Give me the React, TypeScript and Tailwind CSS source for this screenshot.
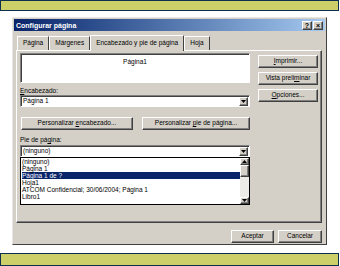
import React from "react";

const raised =
  "border border-t-white border-l-white border-r-[#404040] border-b-[#404040] shadow-[inset_-1px_-1px_0_#808080]";
const sunken =
  "border border-t-[#808080] border-l-[#808080] border-r-white border-b-white shadow-[inset_1px_1px_0_#404040]";

function Arrow({ up = false }: { up?: boolean }) {
  return (
    <svg width="5" height="3" viewBox="0 0 5 3" className={up ? "rotate-180" : ""}>
      <path d="M0 0H5L2.5 3Z" fill="#000" />
    </svg>
  );
}

function Btn({ children, className = "" }: { children: React.ReactNode; className?: string }) {
  return (
    <div
      className={`${raised} bg-[#d4d0c8] h-[13px] flex items-center justify-center text-[6.5px] leading-none text-black ${className}`}
    >
      <span className="whitespace-pre">{children}</span>
    </div>
  );
}

function Combo({ value }: { value: string }) {
  return (
    <div className={`${sunken} bg-white h-[12px] flex items-center`}>
      <div className="flex-1 pl-[2px] text-[6.5px] leading-none">{value}</div>
      <div className={`${raised} bg-[#d4d0c8] w-[9px] h-[9px] mr-[1px] flex items-center justify-center`}>
        <Arrow />
      </div>
    </div>
  );
}

function Tab({ label, active = false }: { label: string; active?: boolean }) {
  return (
    <div
      className={
        active
          ? "relative z-10 h-[16px] -mb-[1px] px-[5px] bg-[#d4d0c8] border border-b-0 border-t-white border-l-white border-r-[#404040] flex items-center text-[6.5px] leading-none"
          : "h-[14px] px-[5px] bg-[#d4d0c8] border border-b-0 border-t-white border-l-white border-r-[#404040] flex items-center text-[6.5px] leading-none"
      }
    >
      {label}
    </div>
  );
}

export default function App() {
  const items = [
    "(ninguno)",
    "Página 1",
    "Página 1 de ?",
    "Hoja1",
    "ATCOM Confidencial; 30/06/2004; Página 1",
    "Libro1",
  ];
  return (
    <div className="w-[340px] h-[266px] bg-white flex flex-col font-['Liberation_Sans',Arial,sans-serif] text-black">
      <div className="h-[11px] w-[339px] bg-[#cdcf68] border border-[#0f2f4f]" />

      <div className="mt-[6px] ml-[12px] w-[315px] h-[228px] bg-[#d4d0c8] border border-t-[#e8e6e2] border-l-[#e8e6e2] border-r-[#404040] border-b-[#404040] flex flex-col">
        {/* title bar */}
        <div className="h-[12px] mx-[1px] mt-[1px] px-[2px] flex items-center justify-between bg-linear-to-r from-[#0a246a] to-[#a6caf0]">
          <span className="text-white font-bold text-[7px] leading-none">Configurar página</span>
          <div className="flex gap-[1px]">
            <div className={`${raised} bg-[#d4d0c8] w-[10px] h-[9px] flex items-center justify-center text-[7px] font-bold leading-none`}>
              ?
            </div>
            <div className={`${raised} bg-[#d4d0c8] w-[10px] h-[9px] flex items-center justify-center text-[7px] font-bold leading-none`}>
              ×
            </div>
          </div>
        </div>

        {/* tabs */}
        <div className="mt-[3px] ml-[4px] flex items-end h-[16px]">
          <Tab label="Página" />
          <Tab label="Márgenes" />
          <Tab label="Encabezado y pie de página" active />
          <Tab label="Hoja" />
        </div>

        {/* panel */}
        <div className="ml-[3px] w-[306px] h-[173px] border border-t-white border-l-white border-r-[#404040] border-b-[#404040] shadow-[inset_-1px_-1px_0_#808080] flex pl-[3px] pt-[2px] gap-[8px]">
          <div className="w-[230px] flex flex-col">
            <div className={`${sunken} bg-white h-[30px] flex justify-center pt-[5px]`}>
              <span className="text-[6.5px] leading-none">Página1</span>
            </div>
            <div className="mt-[4px] h-[7px] text-[6.5px] leading-[7px]">
              <span className="underline">E</span>ncabezado:
            </div>
            <div className="mt-[1px]">
              <Combo value="Página 1" />
            </div>
            <div className="mt-[10px] flex gap-[9px] pl-[1px]">
              <Btn className="w-[112px]">
                Personalizar <span className="underline">e</span>ncabezado...
              </Btn>
              <Btn className="w-[108px]">
                Personalizar <span className="underline">p</span>ie de página...
              </Btn>
            </div>
            <div className="mt-[6px] h-[7px] text-[6.5px] leading-[7px]">
              Pie de pá<span className="underline">g</span>ina:
            </div>
            <div className="mt-[2px]">
              <Combo value="(ninguno)" />
            </div>
            <div className="h-[48px] bg-white border border-black flex">
              <div className="flex-1 pl-[1px] overflow-hidden">
                {items.map((t, i) => (
                  <div
                    key={t}
                    className={`h-[7px] text-[6.5px] leading-[7px] whitespace-nowrap ${
                      i === 2 ? "bg-[#0a246a] text-white" : ""
                    }`}
                  >
                    {t}
                  </div>
                ))}
              </div>
              <div className="w-[9px] flex flex-col bg-[#ecebe8]">
                <div className={`${raised} bg-[#d4d0c8] h-[7px] flex items-center justify-center`}>
                  <Arrow up />
                </div>
                <div className={`${raised} bg-[#d4d0c8] h-[12px]`} />
                <div className="flex-1" />
                <div className={`${raised} bg-[#d4d0c8] h-[7px] flex items-center justify-center`}>
                  <Arrow />
                </div>
              </div>
            </div>
          </div>

          <div className="w-[60px] flex flex-col gap-[4px] pt-[2px]">
            <Btn>
              <span className="underline">I</span>mprimir...
            </Btn>
            <Btn>
              Vista preli<span className="underline">m</span>inar
            </Btn>
            <Btn>
              <span className="underline">O</span>pciones...
            </Btn>
          </div>
        </div>

        {/* bottom buttons */}
        <div className="mt-[7px] flex justify-end gap-[4px] pr-[4px]">
          <Btn className="w-[43px]">Aceptar</Btn>
          <Btn className="w-[44px]">Cancelar</Btn>
        </div>
      </div>

      <div className="mt-[8px] h-[13px] w-[339px] bg-[#cdcf68] border border-[#0f2f4f]" />
    </div>
  );
}
